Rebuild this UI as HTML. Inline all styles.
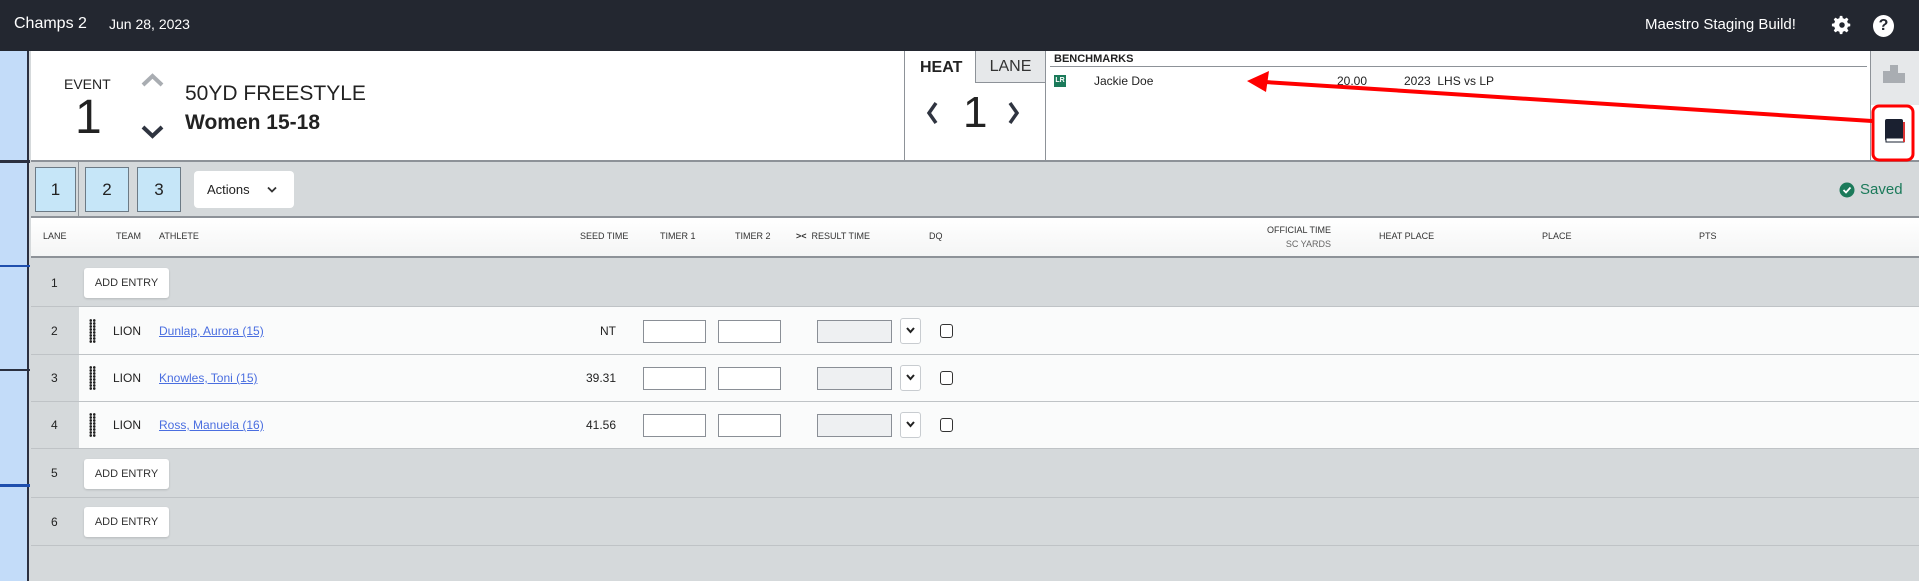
<!DOCTYPE html>
<html><head><meta charset="utf-8"><style>
*{box-sizing:border-box;margin:0;padding:0}
body{width:1919px;height:581px;overflow:hidden;background:#d5d9db;font-family:"Liberation Sans",sans-serif;position:relative;color:#222}
.a{position:absolute}
.top{left:0;top:0;width:1919px;height:51px;background:#232730;color:#fff}
.hdr{font-size:9px;color:#333;top:231px}
.row{left:31px;width:1888px;border-bottom:1px solid #bfc3c6}
.btn{background:#fff;border-radius:3px;font-size:11px;color:#333;text-align:center;line-height:30px;width:85px;height:30px;box-shadow:0 1px 2px rgba(0,0,0,.15)}
.inp{background:#fff;border:1px solid #8a8f96;width:63px;height:23px}
.lnk{color:#4a6ee0;text-decoration:underline;font-size:12px}
.dd{width:21px;height:26px;background:#fff;border:1px solid #c8ccd0;border-radius:3px}
.dots{width:7px;height:24px;background:radial-gradient(circle,#222 1.2px,transparent 1.5px) 0 0/3.5px 3px}
</style></head><body>
<div class="a top">
 <div class="a" style="left:14px;top:15px;font-size:16px">Champs 2</div>
 <div class="a" style="left:109px;top:16px;font-size:14px">Jun 28, 2023</div>
 <div class="a" style="left:1645px;top:16px;font-size:15px">Maestro Staging Build!</div>
 <svg class="a" style="left:1831px;top:14px" width="22" height="22" viewBox="0 0 24 24"><path fill="#fff" d="M12 8a4 4 0 100 8 4 4 0 000-8zm9 5.3v-2.6l-2.6-.6a7 7 0 00-.8-1.9l1.4-2.3-1.9-1.9-2.3 1.4a7 7 0 00-1.9-.8L12.3 2h-2.6l-.6 2.6a7 7 0 00-1.9.8L4.9 4 3 5.9l1.4 2.3a7 7 0 00-.8 1.9L1 10.7v2.6l2.6.6a7 7 0 00.8 1.9L3 18.1 4.9 20l2.3-1.4a7 7 0 001.9.8l.6 2.6h2.6l.6-2.6a7 7 0 001.9-.8l2.3 1.4 1.9-1.9-1.4-2.3a7 7 0 00.8-1.9z"/><circle cx="12" cy="12" r="3" fill="#232730"/></svg>
 <div class="a" style="left:1873px;top:15px;width:21px;height:22px;border-radius:50%;background:#fff;color:#232730;font-weight:bold;font-size:16px;text-align:center;line-height:22px">?</div>
</div>
<div class="a" style="left:0;top:51px;width:29px;height:530px;background:#c3dcf9;border-right:2px solid #2b3040"></div>
<div class="a" style="left:0;top:160px;width:30px;height:3px;background:#2b3040"></div>
<div class="a" style="left:0;top:265px;width:30px;height:2px;background:#1f4fae"></div>
<div class="a" style="left:0;top:369px;width:30px;height:2px;background:#2b3040"></div>
<div class="a" style="left:0;top:484px;width:30px;height:3px;background:#1f4fae"></div>
<div class="a" style="left:31px;top:51px;width:1888px;height:111px;background:#fff;border-bottom:2px solid #8d9298"></div>
<div class="a" style="left:64px;top:76px;font-size:14px">EVENT</div>
<div class="a" style="left:75px;top:90px;font-size:48px">1</div>
<svg class="a" style="left:140px;top:72px" width="25" height="16"><path d="M3 13L12.5 4 22 13" stroke="#a9adb2" stroke-width="4" fill="none"/></svg>
<svg class="a" style="left:140px;top:124px" width="25" height="16"><path d="M3 3l9.5 9L22 3" stroke="#2f3440" stroke-width="4" fill="none"/></svg>
<div class="a" style="left:185px;top:82px;font-size:21px">50YD FREESTYLE</div>
<div class="a" style="left:185px;top:111px;font-size:21px;font-weight:bold">Women 15-18</div>
<div class="a" style="left:904px;top:51px;width:1px;height:110px;background:#8d9298"></div>
<div class="a" style="left:1045px;top:51px;width:1px;height:110px;background:#8d9298"></div>
<div class="a" style="left:975px;top:51px;width:70px;height:32px;background:#e6e8ea;border-left:1px solid #8d9298;border-bottom:1px solid #8d9298;font-size:16px;text-align:center;line-height:32px;color:#333">LANE</div>
<div class="a" style="left:920px;top:59px;font-size:16px;font-weight:bold">HEAT</div>
<svg class="a" style="left:925px;top:100px" width="14" height="26"><path d="M11 3L4 13l7 10" stroke="#2f3440" stroke-width="3.5" fill="none"/></svg>
<div class="a" style="left:963px;top:88px;font-size:44px">1</div>
<svg class="a" style="left:1007px;top:100px" width="14" height="26"><path d="M3 3l7 10-7 10" stroke="#2f3440" stroke-width="3.5" fill="none"/></svg>
<div class="a" style="left:1054px;top:53px;font-size:11px;font-weight:bold">BENCHMARKS</div>
<div class="a" style="left:1050px;top:66px;width:817px;height:1px;background:#8d9298"></div>
<div class="a" style="left:1054px;top:75px;width:12px;height:12px;background:#1b7a5a;color:#fff;font-size:7px;font-weight:bold;text-align:center;line-height:12px">LR</div>
<div class="a" style="left:1094px;top:74px;font-size:12px">Jackie Doe</div>
<div class="a" style="left:1337px;top:74px;font-size:12px">20.00</div>
<div class="a" style="left:1404px;top:74px;font-size:12px">2023&nbsp; LHS vs LP</div>
<div class="a" style="left:1870px;top:51px;width:1px;height:110px;background:#8d9298"></div>
<div class="a" style="left:1871px;top:51px;width:48px;height:54px;background:#e6e8ea"></div>
<svg class="a" style="left:1883px;top:65px" width="22" height="18"><rect x="0" y="6" width="7" height="12" fill="#a9adb2"/><rect x="7" y="0" width="8" height="18" fill="#a9adb2"/><rect x="15" y="8" width="7" height="10" fill="#a9adb2"/></svg>
<svg class="a" style="left:1884px;top:118px" width="22" height="28"><rect x="1" y="1" width="18" height="22" rx="2" fill="#1a2030"/><rect x="2" y="20" width="18" height="4" fill="#fff" stroke="#1a2030"/><rect x="19" y="4" width="2" height="20" fill="#d33"/></svg>
<svg class="a" style="left:0;top:0" width="1919" height="200"><path d="M1872 121L1265 82" stroke="#f00" stroke-width="4" fill="none"/><path d="M1247 81l22-10-3 21z" fill="#f00"/><rect x="1873" y="106" width="40" height="54" rx="6" fill="none" stroke="#f00" stroke-width="3"/></svg>
<div class="a" style="left:35px;top:167px;width:41px;height:45px;background:#c6e6f8;border:1px solid #6c7a85;font-size:17px;text-align:center;line-height:43px">1</div>
<div class="a" style="left:78px;top:162px;width:1px;height:54px;background:#8d9298"></div>
<div class="a" style="left:85px;top:167px;width:44px;height:45px;background:#c6e6f8;border:1px solid #6c7a85;font-size:17px;text-align:center;line-height:43px">2</div>
<div class="a" style="left:137px;top:167px;width:44px;height:45px;background:#c6e6f8;border:1px solid #6c7a85;font-size:17px;text-align:center;line-height:43px">3</div>
<div class="a" style="left:194px;top:171px;width:100px;height:37px;background:#fff;border-radius:4px;font-size:13px;line-height:37px;padding-left:13px">Actions</div>
<svg class="a" style="left:267px;top:186px" width="10" height="8"><path d="M1 1.5l4 4 4-4" stroke="#333" stroke-width="1.8" fill="none"/></svg>
<svg class="a" style="left:1839px;top:182px" width="16" height="16"><circle cx="8" cy="8" r="7.5" fill="#1b7a5a"/><path d="M4.5 8l2.5 2.5L11.5 5.5" stroke="#fff" stroke-width="1.8" fill="none"/></svg>
<div class="a" style="left:1860px;top:181px;font-size:15px;color:#1b7a5a">Saved</div>
<div class="a" style="left:31px;top:216px;width:1888px;height:42px;background:linear-gradient(#fff,#f4f5f5);border-top:2px solid #8d9298;border-bottom:2px solid #8d9298"></div>
<div class="a hdr" style="left:43px">LANE</div>
<div class="a hdr" style="left:116px">TEAM</div>
<div class="a hdr" style="left:159px">ATHLETE</div>
<div class="a hdr" style="left:580px">SEED TIME</div>
<div class="a hdr" style="left:660px">TIMER 1</div>
<div class="a hdr" style="left:735px">TIMER 2</div>
<div class="a hdr" style="left:796px"><b>&gt;&lt;</b>&nbsp; RESULT TIME</div>
<div class="a hdr" style="left:929px">DQ</div>
<div class="a hdr" style="left:1240px;top:225px;width:91px;text-align:right">OFFICIAL TIME</div>
<div class="a hdr" style="left:1240px;top:239px;width:91px;text-align:right;color:#666">SC YARDS</div>
<div class="a hdr" style="left:1379px">HEAT PLACE</div>
<div class="a hdr" style="left:1542px">PLACE</div>
<div class="a hdr" style="left:1699px">PTS</div>
<div class="a row" style="top:258px;height:49px"></div>
<div class="a" style="left:51px;top:276px;font-size:12px">1</div>
<div class="a btn" style="left:84px;top:268px">ADD ENTRY</div>
<div class="a row" style="top:307px;height:48px;background:linear-gradient(90deg,#d5d9db 48px,#fafbfb 48px)"></div>
<div class="a row" style="top:355px;height:47px;background:linear-gradient(90deg,#d5d9db 48px,#fafbfb 48px)"></div>
<div class="a row" style="top:402px;height:47px;background:linear-gradient(90deg,#d5d9db 48px,#fafbfb 48px)"></div>
<div class="a" style="left:51px;top:324px;font-size:12px">2</div>
<div class="a" style="left:51px;top:371px;font-size:12px">3</div>
<div class="a" style="left:51px;top:418px;font-size:12px">4</div>
<div class="a dots" style="left:89px;top:319px"></div>
<div class="a dots" style="left:89px;top:366px"></div>
<div class="a dots" style="left:89px;top:413px"></div>
<div class="a" style="left:113px;top:324px;font-size:12px">LION</div>
<div class="a" style="left:113px;top:371px;font-size:12px">LION</div>
<div class="a" style="left:113px;top:418px;font-size:12px">LION</div>
<div class="a lnk" style="left:159px;top:324px">Dunlap, Aurora (15)</div>
<div class="a lnk" style="left:159px;top:371px">Knowles, Toni (15)</div>
<div class="a lnk" style="left:159px;top:418px">Ross, Manuela (16)</div>
<div class="a" style="left:560px;top:324px;width:56px;text-align:right;font-size:12px">NT</div>
<div class="a" style="left:560px;top:371px;width:56px;text-align:right;font-size:12px">39.31</div>
<div class="a" style="left:560px;top:418px;width:56px;text-align:right;font-size:12px">41.56</div>
<div class="a inp" style="left:643px;top:320px"></div><div class="a inp" style="left:718px;top:320px"></div>
<div class="a inp" style="left:643px;top:367px"></div><div class="a inp" style="left:718px;top:367px"></div>
<div class="a inp" style="left:643px;top:414px"></div><div class="a inp" style="left:718px;top:414px"></div>
<div class="a inp" style="left:817px;top:320px;width:75px;background:#eef0f2"></div>
<div class="a inp" style="left:817px;top:367px;width:75px;background:#eef0f2"></div>
<div class="a inp" style="left:817px;top:414px;width:75px;background:#eef0f2"></div>
<div class="a dd" style="left:900px;top:318px"><svg width="19" height="24"><path d="M6 9l3.5 4L13 9" stroke="#222" stroke-width="2" fill="none"/></svg></div>
<div class="a dd" style="left:900px;top:365px"><svg width="19" height="24"><path d="M6 9l3.5 4L13 9" stroke="#222" stroke-width="2" fill="none"/></svg></div>
<div class="a dd" style="left:900px;top:412px"><svg width="19" height="24"><path d="M6 9l3.5 4L13 9" stroke="#222" stroke-width="2" fill="none"/></svg></div>
<div class="a" style="left:940px;top:324px;width:13px;height:14px;border:1px solid #333;border-radius:3px;background:#fff"></div>
<div class="a" style="left:940px;top:371px;width:13px;height:14px;border:1px solid #333;border-radius:3px;background:#fff"></div>
<div class="a" style="left:940px;top:418px;width:13px;height:14px;border:1px solid #333;border-radius:3px;background:#fff"></div>
<div class="a row" style="top:449px;height:49px"></div>
<div class="a" style="left:51px;top:466px;font-size:12px">5</div>
<div class="a btn" style="left:84px;top:459px">ADD ENTRY</div>
<div class="a row" style="top:498px;height:48px"></div>
<div class="a" style="left:51px;top:515px;font-size:12px">6</div>
<div class="a btn" style="left:84px;top:507px">ADD ENTRY</div>
</body></html>
